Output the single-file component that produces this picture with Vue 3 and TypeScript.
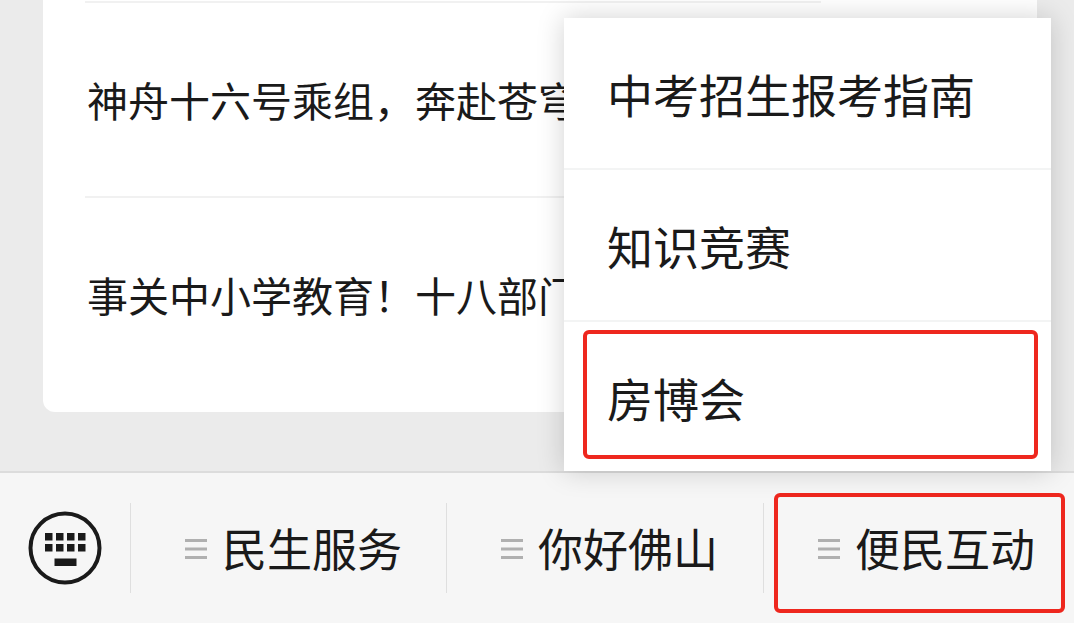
<script setup lang="ts">
import { ref } from 'vue'

interface MenuEntry {
  label: string
  marked: boolean
}

const articles: string[] = ['神舟十六号乘组，奔赴苍穹', '事关中小学教育！十八部门']

const submenu: MenuEntry[] = [
  { label: '中考招生报考指南', marked: false },
  { label: '知识竞赛', marked: false },
  { label: '房博会', marked: true },
]

const tabs: MenuEntry[] = [
  { label: '民生服务', marked: false },
  { label: '你好佛山', marked: false },
  { label: '便民互动', marked: true },
]

const openTab = ref('便民互动')

function toggle(label: string): void {
  openTab.value = openTab.value === label ? '' : label
}

const keyColumns: number[] = [17, 28, 39, 50]
const keyRows: number[] = [22, 33]
</script>

<template>
  <div class="page">
    <main class="feed">
      <section class="card">
        <a v-for="title in articles" :key="title" class="article" href="#">{{ title }}</a>
      </section>
      <nav v-if="openTab === '便民互动'" class="popup" aria-label="便民互动">
        <button v-for="item in submenu" :key="item.label" type="button" class="option">
          {{ item.label }}
          <span v-if="item.marked" class="mark"></span>
        </button>
      </nav>
    </main>
    <footer class="bar">
      <button type="button" class="keyboard" aria-label="键盘">
        <svg width="74" height="74" viewBox="0 0 74 74" aria-hidden="true">
          <circle cx="37" cy="37" r="34.5" fill="none" stroke="#1a1a1a" stroke-width="4" />
          <g fill="#1a1a1a">
            <template v-for="y in keyRows" :key="y">
              <rect v-for="x in keyColumns" :key="x" :x="x" :y="y" width="7.5" height="7.5" />
            </template>
            <rect x="26.5" y="47.5" width="22" height="7.5" />
          </g>
        </svg>
      </button>
      <button
        v-for="tab in tabs"
        :key="tab.label"
        type="button"
        class="tab"
        :aria-expanded="openTab === tab.label"
        @click="toggle(tab.label)"
      >
        <svg width="22" height="22" viewBox="0 0 22 22" aria-hidden="true">
          <path d="M0 3.5H22M0 12H22M0 20.5H22" stroke="#b0b0b0" stroke-width="3" />
        </svg>
        <span>{{ tab.label }}</span>
        <span v-if="tab.marked" class="mark"></span>
      </button>
    </footer>
  </div>
</template>

<style>
body {
  margin: 0;
  background: #ebebeb;
}
</style>

<style scoped>
.page {
  display: flex;
  flex-direction: column;
  min-height: 100vh;
  color: #1a1a1a;
  font-family: "Noto Sans CJK SC", sans-serif;
}

button {
  margin: 0;
  padding: 0;
  border: 0;
  background: none;
  color: inherit;
  font: inherit;
  text-align: left;
  cursor: pointer;
}

.feed {
  position: relative;
  flex: 1;
  padding: 0 37px 59px 43px;
}

.card {
  padding: 1px 42px 21px;
  border-radius: 0 0 12px 12px;
  background: #fff;
}

.article {
  display: block;
  height: 60px;
  padding: 66px 0 67px 2px;
  border-top: 2px solid #f1f1f1;
  color: inherit;
  font-size: 41px;
  line-height: 60px;
  text-decoration: none;
  white-space: nowrap;
}

.article:first-child {
  margin-right: 174px;
}

.popup {
  position: absolute;
  z-index: 1;
  right: 23px;
  bottom: 0;
  width: calc(50% - 50px);
  background: #fff;
  box-shadow: 0 0 26px rgba(0, 0, 0, 0.18);
}

.option {
  position: relative;
  display: block;
  width: 100%;
  padding: 43px 43px 43px;
  border-bottom: 2px solid #f3f4f4;
  font-size: 46px;
  line-height: 64px;
  white-space: nowrap;
}

.option:last-child {
  padding-bottom: 42px;
  border-bottom: 0;
}

.mark {
  position: absolute;
  border: 4px solid #ee271e;
  border-radius: 6px;
  pointer-events: none;
}

.option .mark {
  inset: 8px 13px 12px 19px;
}

.bar {
  display: grid;
  grid-template-columns: 130px 316fr 317fr 311fr;
  align-items: center;
  box-sizing: border-box;
  height: 152px;
  padding-bottom: 1px;
  border-top: 2px solid #dcdcdc;
  background: #f6f6f6;
}

.keyboard {
  padding-left: 28px;
}

.keyboard svg {
  display: block;
}

.tab {
  position: relative;
  display: flex;
  align-items: center;
  gap: 15px;
  height: 90px;
  padding-left: 54px;
  border-left: 1px solid #dfdfdf;
  font-size: 45px;
  line-height: 64px;
  white-space: nowrap;
}

.tab .mark {
  inset: -10px 9px -20px 10px;
}
</style>
